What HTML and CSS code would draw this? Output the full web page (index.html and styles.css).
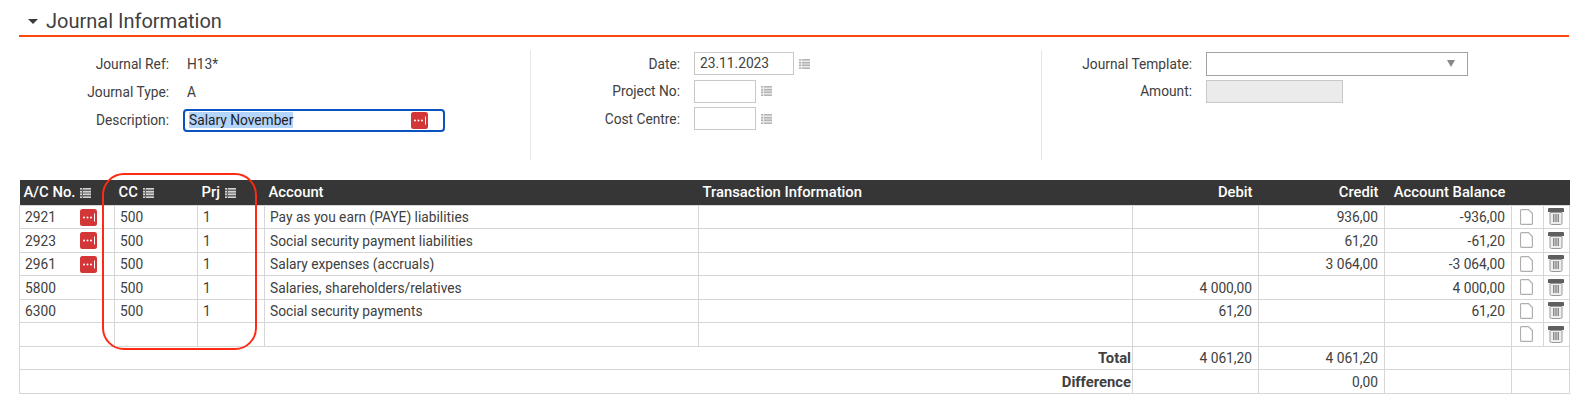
FILE: index.html
```html
<!DOCTYPE html>
<html lang="en">
<head>
<meta charset="utf-8">
<title>Journal Information</title>
<link rel="stylesheet" href="styles.css">
</head>
<body>
<svg class="defs" width="0" height="0" aria-hidden="true">
  <symbol id="i-more" viewBox="0 0 17 17">
    <rect width="17" height="17" rx="2.5" fill="#d33636"/>
    <circle cx="4" cy="8.500" r="1" fill="#fff"/><circle cx="7.500" cy="8.500" r="1" fill="#fff"/><circle cx="11" cy="8.500" r="1" fill="#fff"/>
    <rect x="14" y="4.500" width="1" height="8" fill="#fff"/>
  </symbol>
  <symbol id="i-list" viewBox="0 0 11 10">
    <rect width="11" height="10" fill="currentColor" opacity=".3"/>
    <path d="M0 .75h2M3 .75h8M0 3.750h2M3 3.750h8M0 6.250h2M3 6.250h8M0 9.250h2M3 9.250h8" stroke="currentColor" stroke-width="1.500" fill="none"/>
  </symbol>
  <symbol id="i-doc" viewBox="0 0 13 16">
    <path d="M1.500.6h7l3.900 3.900v9.900a1 1 0 0 1-1 1h-9.900a1 1 0 0 1-1-1V1.600a1 1 0 0 1 1-1z" fill="#fff" stroke="#aeaeae" stroke-width="1.200"/>
  </symbol>
  <symbol id="i-trash" viewBox="0 0 16 17">
    <path d="M1 0h14a1 1 0 0 1 1 1v3H0V1a1 1 0 0 1 1-1z" fill="#5f5f5f"/>
    <path d="M2 4.500h12v10.500a1.500 1.500 0 0 1-1.500 1.500h-9A1.500 1.500 0 0 1 2 15z" fill="#ededed" stroke="#9a9a9a"/>
    <path d="M5 6h1.500v8H5zM7.250 6h1.500v8h-1.500zM9.500 6H11v8H9.500z" fill="#8c8c8c"/>
  </symbol>
</svg>

<section class="panel">
  <h2 class="title"><span class="caret"></span>Journal Information</h2>
  <div class="form">
    <div class="fcol fcol-1">
      <div class="frow"><span class="lbl">Journal Ref:</span><span class="val">H13*</span></div>
      <div class="frow"><span class="lbl">Journal Type:</span><span class="val">A</span></div>
      <div class="frow"><span class="lbl">Description:</span>
        <span class="focus-input"><span class="sel">Salary November</span><svg class="ico-more"><use href="#i-more"/></svg></span>
      </div>
    </div>
    <div class="fcol fcol-2">
      <div class="frow"><span class="lbl">Date:</span><span class="box box-date">23.11.2023</span><svg class="ico-list"><use href="#i-list"/></svg></div>
      <div class="frow"><span class="lbl">Project No:</span><span class="box box-short"></span><svg class="ico-list"><use href="#i-list"/></svg></div>
      <div class="frow"><span class="lbl">Cost Centre:</span><span class="box box-short"></span><svg class="ico-list"><use href="#i-list"/></svg></div>
    </div>
    <div class="fcol fcol-3">
      <div class="frow"><span class="lbl">Journal Template:</span><span class="select"><span class="arrow"></span></span></div>
      <div class="frow"><span class="lbl">Amount:</span><span class="box box-amount"></span></div>
    </div>
  </div>

  <div class="table-wrap">
    <table class="grid">
      <colgroup>
        <col class="c-ac"><col class="c-cc"><col class="c-prj"><col class="c-account"><col class="c-info">
        <col class="c-money"><col class="c-money"><col class="c-balance"><col class="c-doc"><col class="c-trash">
      </colgroup>
      <thead>
        <tr>
          <th>A/C No. <svg class="ico-list"><use href="#i-list"/></svg></th>
          <th>CC <svg class="ico-list"><use href="#i-list"/></svg></th>
          <th>Prj <svg class="ico-list"><use href="#i-list"/></svg></th>
          <th>Account</th>
          <th>Transaction Information</th>
          <th class="num">Debit</th>
          <th class="num">Credit</th>
          <th class="num">Account Balance</th>
          <th></th>
          <th></th>
        </tr>
      </thead>
      <tbody>
        <tr>
          <td><div class="ac">2921<svg class="ico-more"><use href="#i-more"/></svg></div></td><td>500</td><td>1</td><td>Pay as you earn (PAYE) liabilities</td><td></td>
          <td class="num"></td><td class="num">936,00</td><td class="num">-936,00</td>
          <td class="act"><svg class="ico-doc"><use href="#i-doc"/></svg></td><td class="act"><svg class="ico-trash"><use href="#i-trash"/></svg></td>
        </tr>
        <tr>
          <td><div class="ac">2923<svg class="ico-more"><use href="#i-more"/></svg></div></td><td>500</td><td>1</td><td>Social security payment liabilities</td><td></td>
          <td class="num"></td><td class="num">61,20</td><td class="num">-61,20</td>
          <td class="act"><svg class="ico-doc"><use href="#i-doc"/></svg></td><td class="act"><svg class="ico-trash"><use href="#i-trash"/></svg></td>
        </tr>
        <tr>
          <td><div class="ac">2961<svg class="ico-more"><use href="#i-more"/></svg></div></td><td>500</td><td>1</td><td>Salary expenses (accruals)</td><td></td>
          <td class="num"></td><td class="num">3 064,00</td><td class="num">-3 064,00</td>
          <td class="act"><svg class="ico-doc"><use href="#i-doc"/></svg></td><td class="act"><svg class="ico-trash"><use href="#i-trash"/></svg></td>
        </tr>
        <tr>
          <td>5800</td><td>500</td><td>1</td><td>Salaries, shareholders/relatives</td><td></td>
          <td class="num">4 000,00</td><td class="num"></td><td class="num">4 000,00</td>
          <td class="act"><svg class="ico-doc"><use href="#i-doc"/></svg></td><td class="act"><svg class="ico-trash"><use href="#i-trash"/></svg></td>
        </tr>
        <tr>
          <td>6300</td><td>500</td><td>1</td><td>Social security payments</td><td></td>
          <td class="num">61,20</td><td class="num"></td><td class="num">61,20</td>
          <td class="act"><svg class="ico-doc"><use href="#i-doc"/></svg></td><td class="act"><svg class="ico-trash"><use href="#i-trash"/></svg></td>
        </tr>
        <tr>
          <td></td><td></td><td></td><td></td><td></td>
          <td class="num"></td><td class="num"></td><td class="num"></td>
          <td class="act"><svg class="ico-doc"><use href="#i-doc"/></svg></td><td class="act"><svg class="ico-trash"><use href="#i-trash"/></svg></td>
        </tr>
        <tr>
          <td class="sum" colspan="5">Total</td>
          <td class="num">4 061,20</td><td class="num">4 061,20</td><td></td><td colspan="2"></td>
        </tr>
        <tr>
          <td class="sum" colspan="5">Difference</td>
          <td class="num"></td><td class="num">0,00</td><td></td><td colspan="2"></td>
        </tr>
      </tbody>
    </table>
    <div class="callout"></div>
  </div>
</section>
</body>
</html>
```
FILE: styles.css
```css
* { box-sizing: border-box; }
html, body { margin: 0; padding: 0; background: #fff; }
body { font-family: Roboto, "Liberation Sans", sans-serif; font-size: 13.75px; color: #404040; }
.defs { position: absolute; }

.panel { width: 1550px; margin-left: 19px; }

.title {
  height: 37px; margin: 0; padding: 9px 0 0 8px;
  display: flex; align-items: flex-start;
  font-size: 20px; line-height: 25px; font-weight: 400; color: #3f3f3f;
  border-bottom: 2px solid #f9480d;
}
.caret {
  width: 0; height: 0; margin: 10px 8px 0 1px;
  border-left: 5.500px solid transparent; border-right: 5.500px solid transparent; border-top: 5.500px solid #3a3a3a;
}

.form { display: flex; height: 143px; padding-top: 13px; }
.fcol { display: flex; flex-direction: column; align-self: flex-start; }
.fcol-1 { width: 511px; height: 84px; }
.fcol-2 { width: 511px; height: 110px; border-left: 1px solid #e6e6e6; }
.fcol-3 { flex: 1; height: 110px; border-left: 1px solid #e6e6e6; }
.frow { height: 28px; display: flex; align-items: center; flex: none; }
.fcol-2 .frow, .fcol-3 .frow { height: 27.500px; }
.lbl { text-align: right; padding-right: 14px; flex: none; }
.fcol-1 .lbl { width: 164px; }
.fcol-2 .lbl { width: 163px; }
.fcol-3 .lbl { width: 164px; }
.val { margin-left: 4px; }

.focus-input {
  width: 262px; height: 23px;
  border: 2px solid #0a53be; border-radius: 4px;
  display: flex; align-items: center; justify-content: space-between;
  padding: 0 15px 0 4px; color: #222;
}
.sel { background: #b4d5fe; line-height: 16px; }
.focus-input .ico-more { width: 17px; height: 17px; }

.box { height: 23px; border: 1px solid #c8c8c8; display: block; flex: none; padding-left: 5px; line-height: 21px; }
.box-date { width: 100px; }
.box-short { width: 62px; }
.box-amount { width: 137px; background: #ebebeb; }
.select {
  width: 262px; height: 24px; border: 1px solid #a2a2a2; flex: none;
  display: flex; align-items: center; justify-content: flex-end; padding-right: 12px;
}
.arrow { width: 0; height: 0; border-left: 4.500px solid transparent; border-right: 4.500px solid transparent; border-top: 7px solid #888; }

.ico-list { width: 11px; height: 10px; color: #b4b4b4; flex: none; margin-left: 5px; }

.table-wrap { position: relative; }
.grid { width: 1550px; table-layout: fixed; border-collapse: collapse; }
.c-ac { width: 95px; } .c-cc { width: 83px; } .c-prj { width: 67px; }
.c-account { width: 434px; } .c-info { width: 434px; }
.c-money { width: 126px; } .c-balance { width: 127px; } .c-doc { width: 32px; } .c-trash { width: 26px; }

.grid th {
  height: 25px; padding: 0 4px; background: #363636; color: #fff;
  font-weight: 500; font-size: 14.800px; text-align: left; white-space: nowrap;
}
.grid th .ico-list { color: #d2d2d2; margin-left: 1px; vertical-align: -1px; }
.grid td { height: 23.500px; padding: 1px 5px 0; border: 1px solid #d6d6d6; white-space: nowrap; }
.grid th.num, .grid td.num { text-align: right; padding-right: 6px; }
.grid td.sum { text-align: right; font-weight: 700; font-size: 14.800px; padding-right: 1px; }
.ac { display: flex; align-items: center; justify-content: space-between; padding-right: 12px; }
.ac .ico-more { width: 17px; height: 17px; }
.grid td.act { text-align: center; padding: 0 2px 0 0; line-height: 0; }
.ico-doc { width: 13px; height: 16px; }
.ico-trash { width: 16px; height: 17px; }

.callout {
  position: absolute; left: 83px; top: -7px; width: 155px; height: 177px;
  border: 2px solid #ff2a12; border-radius: 22px; pointer-events: none;
}
```
